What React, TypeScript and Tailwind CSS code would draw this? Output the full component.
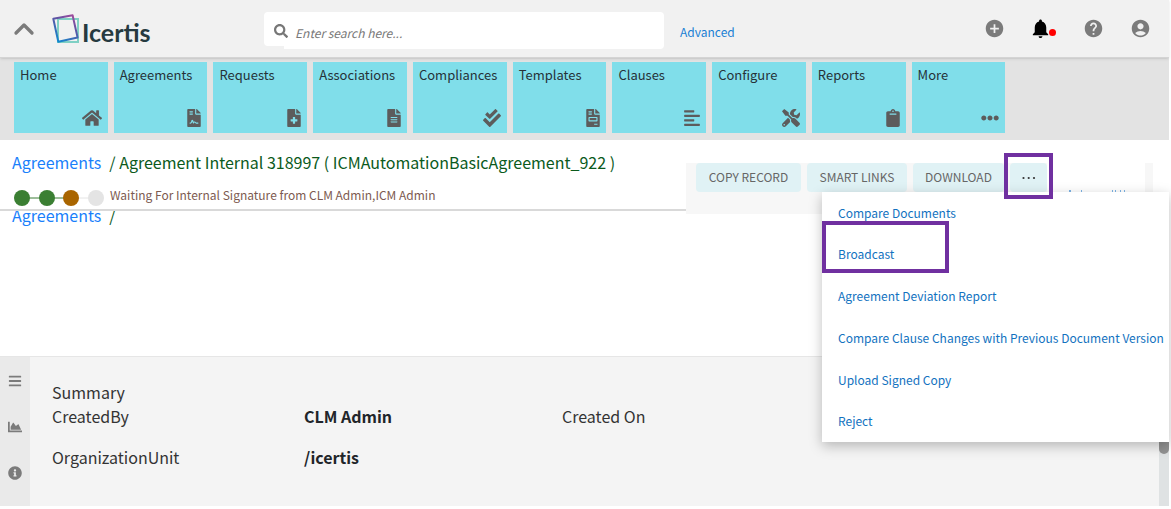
import { ChevronUp } from 'lucide-react';
import type { IconType } from 'react-icons';
import {
  FaAlignLeft,
  FaBars,
  FaChartArea,
  FaCheckDouble,
  FaClipboard,
  FaEllipsisH,
  FaFileAlt,
  FaFileContract,
  FaFileInvoice,
  FaFileMedical,
  FaHome,
  FaInfoCircle,
  FaSearch,
  FaTools,
} from 'react-icons/fa';
import { MdAccountCircle, MdAddCircle, MdHelp, MdNotifications } from 'react-icons/md';

interface Tile {
  label: string;
  icon: IconType;
  width: string;
}

const tiles: Tile[] = [
  { label: 'Home', icon: FaHome, width: 'w-5' },
  { label: 'Agreements', icon: FaFileContract, width: 'w-[14px]' },
  { label: 'Requests', icon: FaFileMedical, width: 'w-[14px]' },
  { label: 'Associations', icon: FaFileAlt, width: 'w-[14px]' },
  { label: 'Compliances', icon: FaCheckDouble, width: 'w-[18px]' },
  { label: 'Templates', icon: FaFileInvoice, width: 'w-[14px]' },
  { label: 'Clauses', icon: FaAlignLeft, width: 'w-4' },
  { label: 'Configure', icon: FaTools, width: 'w-[18px]' },
  { label: 'Reports', icon: FaClipboard, width: 'w-[14px]' },
  { label: 'More', icon: FaEllipsisH, width: 'w-[18px]' },
];

const menuItems = [
  'Compare Documents',
  'Broadcast',
  'Agreement Deviation Report',
  'Compare Clause Changes with Previous Document Version',
  'Upload Signed Copy',
  'Reject',
];

function Logo() {
  return (
    <a href="#" className="flex items-end" aria-label="Icertis">
      <svg width="28" height="31" viewBox="0 0 28 31" fill="none" className="shrink-0">
        <defs>
          <linearGradient id="frame" x1="22" y1="2" x2="6" y2="29" gradientUnits="userSpaceOnUse">
            <stop offset="0" stopColor="#a24a9c" />
            <stop offset="0.4" stopColor="#5a55a5" />
            <stop offset="1" stopColor="#1089cf" />
          </linearGradient>
        </defs>
        <path d="M6 6h20v23H6z" stroke="#7fd0c4" strokeWidth="2" />
        <path d="M1.3 5.8 20.6 2.2l5 22.4L6.3 28.8z" stroke="url(#frame)" strokeWidth="2" strokeLinejoin="round" />
      </svg>
      <span className="ml-[2px] font-[Lato,sans-serif] text-[25px] leading-6 font-bold text-[#263a40]">Icertis</span>
    </a>
  );
}

function Header() {
  return (
    <header className="relative z-10 flex h-[58px] items-center border-b border-[#d4d4d4] bg-[#f1f1f1] pr-[18px] pl-2 shadow-sm">
      <button type="button" aria-label="Collapse" className="text-[#7b7b7b]">
        <ChevronUp size={32} strokeWidth={2.5} />
      </button>
      <div className="ml-3 w-[212px]">
        <Logo />
      </div>
      <div className="mt-1 flex w-[400px] items-start text-[#777]">
        <label htmlFor="search" className="relative z-10 flex h-[34px] w-5 items-center rounded-l bg-white pt-1 pl-[10px]">
          <FaSearch size={14} className="shrink-0" />
        </label>
        <input
          id="search"
          type="search"
          aria-label="Search"
          placeholder="Enter search here..."
          className="h-[37px] min-w-0 flex-1 rounded-r bg-white pt-1 pl-[11px] text-[12px] italic outline-none placeholder:text-[#777]"
        />
      </div>
      <a href="#" className="mt-1.5 ml-4 text-[12px] text-[#1a7fd4]">Advanced</a>
      <div className="ml-auto flex items-center text-[#7b7b7b]">
        <button type="button" aria-label="Add" className="mr-[24px]"><MdAddCircle size={21} /></button>
        <button type="button" aria-label="Notifications" className="mr-[27px] flex items-end text-black">
          <MdNotifications size={23} />
          <span className="mb-1 -ml-[3px] size-[7px] rounded-full bg-[#f00]" />
        </button>
        <button type="button" aria-label="Help" className="mr-[26px]"><MdHelp size={21} /></button>
        <button type="button" aria-label="Account"><MdAccountCircle size={21} /></button>
      </div>
    </header>
  );
}

function TileNav() {
  return (
    <nav className="bg-[#e3e3e3] pt-1 pb-[7px]">
      <ul className="grid w-[86%] grid-cols-10 gap-[6px] pl-[14px]">
        {tiles.map(({ label, icon: Icon, width }) => (
          <li key={label}>
            <a href="#" className="flex h-[71px] flex-col justify-between bg-[#80deea] px-[6px] pt-1 pb-[6px] text-[13px] leading-[18px] text-[#263238]">
              {label}
              <Icon className={`h-[18px] self-end text-[#5c5c5c] ${width}`} />
            </a>
          </li>
        ))}
      </ul>
    </nav>
  );
}

function Steps() {
  return (
    <svg width="90" height="16" viewBox="0 0 90 16" className="mt-[3px] shrink-0">
      <path d="M8 8h49" stroke="#3a7d34" />
      <path d="M57 8h25" stroke="#e4e4e4" />
      <circle cx="8" cy="8" r="8" fill="#3b7f33" />
      <circle cx="33" cy="8" r="8" fill="#3b7f33" />
      <circle cx="57" cy="8" r="8" fill="#a96500" />
      <circle cx="82" cy="8" r="8" fill="#e4e4e4" />
    </svg>
  );
}

function MoreMenu() {
  return (
    <div className="absolute top-[52px] right-0 z-20 w-[347px] bg-white shadow-[0_4px_12px_rgba(0,0,0,0.25)]">
      <ul className="pb-[2px]">
        {menuItems.map((item) => (
          <li key={item} className="h-[42px] first:h-[41px] last:h-[39px]">
            <a href="#" className="flex h-full items-center pl-4 text-[12px] whitespace-nowrap text-[#1272c0]">{item}</a>
          </li>
        ))}
      </ul>
      {/* Highlight round Broadcast */}
      <div className="pointer-events-none absolute top-[29px] left-0 h-[52px] w-[127px] border-4 border-[#7030a0]" />
    </div>
  );
}

function Toolbar() {
  const button = 'h-[29px] rounded bg-[#e0f2f5] pb-[2px] text-[12px] text-[#666]';
  return (
    <div className="mt-[23px] flex h-[51px] w-[467px] shrink-0 items-start bg-[#f7f7f7]">
      <div className="flex gap-[6px] pl-[10px]">
        <button type="button" className={`${button} w-[105px]`}>COPY RECORD</button>
        <button type="button" className={`${button} w-[100px]`}>SMART LINKS</button>
        <button type="button" className={`${button} w-[91px]`}>DOWNLOAD</button>
        <div className="relative">
          <button type="button" aria-label="More actions" className="flex h-[29px] w-[37px] items-center justify-center rounded bg-[#e0f2f5] text-[#333]">
            <svg width="14" height="4" viewBox="0 0 14 4" fill="currentColor">
              <circle cx="1.5" cy="2" r="1.1" />
              <circle cx="6.7" cy="2" r="1.1" />
              <circle cx="12" cy="2" r="1.1" />
            </svg>
          </button>
          <div className="pointer-events-none absolute -top-[10px] -left-[6px] z-30 h-[46px] w-[49px] border-4 border-[#7030a0]" />
        </div>
      </div>
      <div className="mr-2 h-full flex-1 bg-white pt-[27px] pl-[6px]">
        <svg width="80" height="2" viewBox="0 0 80 2" fill="#7db4e6">
          <path d="M16 0h2v2h-2zM28 0h1v2h-1zM59 0h1v2h-1zM62 0h1v2h-1zM67 0h1v2h-1zM71 0h1v2h-1z" />
        </svg>
      </div>
    </div>
  );
}

function RecordHeader() {
  return (
    <section className="relative h-[216px] bg-white">
      <div className="flex justify-between pr-4">
        <div className="min-w-0 flex-1 text-[16px] leading-6 whitespace-nowrap">
          <div className="relative z-10 h-[71px] border-b-2 border-[#d9d9d9] bg-white pt-[10px] pl-3">
            <h1 className="text-[#0b5a1c]">
              <a href="#" className="mr-2 text-[#1a7ffb]">Agreements</a>
              / Agreement Internal 318997 ( ICMAutomationBasicAgreement_922 )
            </h1>
            <div className="flex gap-[6px] pt-[13px] pl-[2px]">
              <Steps />
              <p className="text-[12px] leading-4 text-[#7d5a50]">Waiting For Internal Signature from CLM Admin,ICM Admin</p>
            </div>
          </div>
          {/* Page breadcrumb, scrolled partly under the sticky one */}
          <div className="-mt-2 pl-3 text-[#0b5a1c]">
            <a href="#" className="mr-2 text-[#1a7ffb]">Agreements</a>/
          </div>
        </div>
        <Toolbar />
      </div>
      <MoreMenu />
    </section>
  );
}

function Summary() {
  return (
    <section className="flex h-[150px] border-t border-[#e6e6e6] bg-[#f4f4f4]">
      <aside className="flex w-[30px] flex-col items-center gap-8 bg-[#eaeaea] pt-[17px] text-[#7b7b7b]">
        <button type="button" aria-label="Menu"><FaBars size={14} /></button>
        <button type="button" aria-label="Chart"><FaChartArea size={14} /></button>
        <button type="button" aria-label="Info"><FaInfoCircle size={14} /></button>
      </aside>
      <div className="flex-1 pt-[23px] pl-[22px] text-[16px] leading-6 text-[#333]">
        <h2>Summary</h2>
        <dl className="grid grid-cols-[252px_258px_258px_1fr] gap-y-[17px]">
          <dt>CreatedBy</dt>
          <dd className="font-bold text-[#212529]">CLM Admin</dd>
          <dt>Created On</dt>
          <dd />
          <dt>OrganizationUnit</dt>
          <dd className="font-bold text-[#212529]">/icertis</dd>
        </dl>
      </div>
      <div className="w-[10px] bg-[#dfe2e3]">
        <div className="h-[97px] rounded-b-full bg-[#929292]" />
      </div>
    </section>
  );
}

export default function App() {
  return (
    <div className="bg-white pr-[2px] font-['Noto_Sans_CJK_SC',sans-serif]">
      <Header />
      <TileNav />
      <main>
        <RecordHeader />
        <Summary />
      </main>
    </div>
  );
}
